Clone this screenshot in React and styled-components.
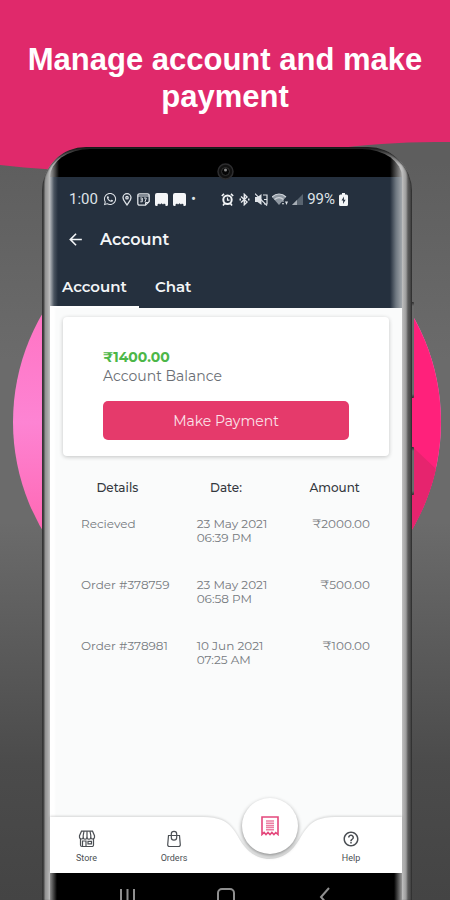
import styled, { createGlobalStyle } from 'styled-components'
import { FaWhatsapp } from 'react-icons/fa'
import { MdArrowBack, MdHelpOutline } from 'react-icons/md'

const GlobalStyle = createGlobalStyle`
    * {
        box-sizing: border-box;
    }

    body {
        margin: 0;
        font-family: Montserrat, Inter, sans-serif;
    }

    button {
        font-family: inherit;
        border: 0;
        cursor: pointer;
    }

    a {
        color: inherit;
        text-decoration: none;
    }
`

const Page = styled.div`
    position: relative;
    display: flex;
    flex-direction: column;
    min-height: 100vh;
    overflow: hidden;
    background: linear-gradient(180deg, #5e5e5e 18%, #6b6b6b 40%, #6b6b6b 58%, #4b4b4b 85%, #444);
`

const Wave = styled.svg`
    position: absolute;
    top: 0;
    left: 0;
    width: 100%;
    height: 172px;
`

const Disc = styled.svg`
    position: absolute;
    top: 208px;
    left: calc(50% - 212px);
    width: 428px;
    height: 428px;
`

const Banner = styled.header`
    position: relative;
    min-height: 147px;
    padding: 41px 12px 0;
`

const BannerTitle = styled.h1`
    margin: 0;
    color: #fff;
    font-family: 'Liberation Sans', Arial, sans-serif;
    font-size: 31px;
    font-weight: 700;
    line-height: 37px;
    text-align: center;
`

const PhoneWrapper = styled.div`
    position: relative;
    flex: 1;
    display: flex;
    margin: 0 38px 0 42px;
`

const PhoneBody = styled.div`
    position: relative;
    flex: 1;
    display: flex;
    flex-direction: column;
    padding: 2px 10px 0 8px;
    border-radius: 44px 44px 0 0;
    background:
        linear-gradient(180deg, #151515, rgba(20, 20, 20, 0) 18px),
        linear-gradient(90deg, #3c3c3c, #4a4a4a 2px, #909090 3px, #a8a8a8 6px, #c0c0c0 8px, #c0c0c0 calc(100% - 10px), #9c9c9c calc(100% - 6px), #5a5a5a calc(100% - 4px), #444 calc(100% - 1px), #333);
    box-shadow: inset 0 1px 2px #1c1c1c;
`

const SideKey = styled.span`
    position: absolute;
    top: ${({ $top }) => $top}px;
    right: -2px;
    width: 3px;
    height: ${({ $height }) => $height}px;
    border-radius: 1px;
    background: linear-gradient(180deg, #2c2c2c, #6b6b6b 4px, #6b6b6b calc(100% - 4px), #2c2c2c);
`

const Forehead = styled.div`
    height: 28px;
    border-radius: 40px 40px 0 0 / 28px 28px 0 0;
    background: linear-gradient(90deg, #a5a5a5, #000 9px, #000 calc(100% - 12px), #a5a5a5);
`

const Camera = styled.svg`
    position: absolute;
    top: 16px;
    left: calc(50% - 10px);
    width: 17px;
    height: 17px;
`

const AppHeader = styled.div`
    color: #f3f5f7;
    background: linear-gradient(90deg, #b3b7bb, #4a5460 4px, #25303e 8px, #25303e calc(100% - 12px), #6f7881 calc(100% - 6px), #a2a7ac);
`

const StatusBar = styled.div`
    display: flex;
    align-items: center;
    justify-content: space-between;
    height: 44px;
    padding: 0 54px 0 19px;
    color: #dfe3e8;
    font-family: Roboto, sans-serif;
    font-size: 15px;
`

const StatusGroup = styled.div`
    display: flex;
    align-items: center;
    gap: ${({ $gap }) => $gap}px;
`

const TitleBar = styled.div`
    display: flex;
    align-items: center;
    gap: 15px;
    height: 36px;
    padding-left: 16px;
`

const BackButton = styled.button`
    display: flex;
    padding: 0;
    color: inherit;
    background: none;
`

const ScreenTitle = styled.h2`
    margin: 0;
    font-size: 16px;
    font-weight: 600;
`

const Tabs = styled.nav`
    display: flex;
    gap: 4px;
    padding-top: 7px;
`

const Tab = styled.button`
    height: 44px;
    padding: 2px 12px 0;
    color: inherit;
    background: none;
    font-size: 15px;
    font-weight: 600;
    border-bottom: 2px solid ${({ $active }) => ($active ? '#fff' : 'transparent')};
`

const Content = styled.main`
    flex: 1;
    padding: 9px 13px 0;
    background: linear-gradient(90deg, #fff 4px, #fafbfb 6px);
`

const BalanceCard = styled.section`
    padding: 31px 40px 16px;
    background: #fff;
    border-radius: 4px;
    box-shadow: 0 1px 4px rgba(0, 0, 0, 0.22);
`

const Balance = styled.div`
    color: #4cb748;
    font-size: 14px;
    font-weight: 700;
    line-height: 19px;
`

const BalanceLabel = styled.div`
    color: #6a6e74;
    font-size: 14px;
    line-height: 19px;
`

const PayButton = styled.button`
    display: block;
    width: 100%;
    height: 39px;
    margin-top: 15px;
    color: #fbe3ea;
    background: #e53a6b;
    border-radius: 5px;
    font-size: 14px;
`

const Table = styled.table`
    width: 100%;
    margin-top: 24px;
    table-layout: fixed;
    border-collapse: collapse;
    font-size: 12px;
    line-height: 14px;

    th {
        height: 16px;
        padding: 0;
        color: #34383e;
        font-size: 12px;
        font-weight: 500;
        text-align: center;
    }

    td {
        height: 61px;
        padding: 21px 0 0 18px;
        color: #75797e;
        vertical-align: top;
    }

    td:nth-child(2) {
        padding-left: 25px;
    }

    td:last-child {
        padding-right: 19px;
        text-align: right;
    }
`

const BottomNav = styled.nav`
    position: relative;
    display: grid;
    grid-template-columns: 73fr 102fr 89fr 74fr;
    height: 56px;
    padding-right: 14px;
    background: #fafbfb;
`

const NavShape = styled.svg`
    position: absolute;
    top: -3px;
    left: 0;
    width: 100%;
    height: 59px;
    overflow: visible;
    filter: drop-shadow(0 -1px 1px rgba(0, 0, 0, 0.15));
`

const NavItem = styled.a`
    position: relative;
    display: flex;
    flex-direction: column;
    align-items: center;
    gap: 4px;
    padding-top: 13px;
    color: #4b4f54;
    font-family: Roboto, sans-serif;
    font-size: 9px;
    line-height: 12px;
`

const NavSlot = styled.div`
    position: relative;
`

const AccountButton = styled.button`
    position: absolute;
    top: -19px;
    left: calc(50% - 28px);
    display: flex;
    align-items: center;
    justify-content: center;
    width: 56px;
    height: 56px;
    color: #e4487c;
    background: #fff;
    border-radius: 50%;
    box-shadow: 0 2px 4px rgba(0, 0, 0, 0.45);
`

const SystemBar = styled.div`
    height: 27px;
    overflow: hidden;
    background: linear-gradient(90deg, #8a8a8a, #000 7px, #000 calc(100% - 8px), #9a9a9a);
`

const SystemKeys = styled.svg`
    display: block;
    width: 100%;
    height: 40px;
`

const LocationIcon = () => (
    <svg width='10' height='13' viewBox='0 0 10 13' fill='none' stroke='currentColor' strokeWidth='1.3'>
        <path d='M5 12C3 9 1 7 1 4.700a4 4 0 0 1 8 0C9 7 7 9 5 12z' />
        <circle cx='5' cy='4.700' r='1.200' />
    </svg>
)

const CalendarIcon = () => (
    <svg width='13' height='13' viewBox='0 0 13 13' fill='none' stroke='currentColor'>
        <path d='M2.500.8h8a1.700 1.700 0 0 1 1.700 1.700v6L8.500 12.200h-6A1.700 1.700 0 0 1 .8 10.500v-8A1.700 1.700 0 0 1 2.500.8z' strokeWidth='1.3' />
        <path d='M1 3h11M3.300 5h2v3.800h-2M3.600 6.900h1.700M7 5h2.300L8 8.900M8.500 12V9.500h3.300' strokeWidth='1' />
    </svg>
)

const StoreBadgeIcon = () => (
    <svg width='13' height='13' viewBox='0 0 13 13' fill='#f5f6f8'>
        <path d='M2 0h9a2 2 0 0 1 2 2v9.500a1.500 1.500 0 0 1-1.500 1.500H10.500v-1.500L9 10.500 8 11.500 6.500 10.300 5 11.500 4 10.500 2.500 11.500V13h-1A1.500 1.500 0 0 1 0 11.500V2a2 2 0 0 1 2-2z' />
    </svg>
)

const AlarmIcon = () => (
    <svg width='13' height='13' viewBox='0 0 13 13' fill='none' stroke='#f3f5f7'>
        <circle cx='6.500' cy='6.800' r='4.200' strokeWidth='2' />
        <path d='M6.500 4.500v2.600h2' strokeWidth='1.2' />
        <path d='M.8 3 3 .9M12.200 3 10 .9M2 12.500l1.500-2M11 12.500l-1.500-2' strokeWidth='1.6' />
    </svg>
)

const BluetoothIcon = () => (
    <svg width='13' height='13' viewBox='0 0 13 13' fill='none' stroke='#e6e9ed' strokeWidth='1.4'>
        <path d='M3 3.500l6 5.500-2.700 2.700V1.300L9 4 3 9.500' />
        <path d='M1.500 6.500h1.500M10 6.500h1.500' strokeWidth='1.800' />
    </svg>
)

const MuteIcon = () => (
    <svg width='13' height='13' viewBox='0 0 13 13' fill='none' stroke='currentColor' strokeWidth='1.2'>
        <path d='M0 4h2.500L6.500 1v11L2.500 9H0z' fill='currentColor' stroke='none' />
        <path d='M8 2h4v9H9M9 6.500h3M0 .6l12 12' />
    </svg>
)

const WifiIcon = () => (
    <svg width='16' height='13' viewBox='0 0 16 13'>
        <path d='M0 4C4 0 10 0 14 4L7 12z' fill='#8e97a1' />
        <path d='M0 4C4 0 10 0 14 4M2.500 6.500c3-2.500 6-2.500 9 0' fill='none' stroke='#cfd4da' strokeWidth='1.2' />
        <path d='M10 8.500h2L11 7zM10 10h2l-1 2zM13 8.500h3L14.500 12z' fill='#dfe3e8' />
    </svg>
)

const SignalIcon = () => (
    <svg width='11' height='11' viewBox='0 0 11 11'>
        <path d='M11 0v11H0z' fill='#596470' />
        <path d='M5 6v5H0z' fill='#a7aeb6' />
    </svg>
)

const BatteryIcon = () => (
    <svg width='9' height='13' viewBox='0 0 9 13'>
        <path d='M3 0h3v1.500h1.500A1.500 1.500 0 0 1 9 3v8.500A1.500 1.500 0 0 1 7.500 13h-6A1.500 1.500 0 0 1 0 11.500V3a1.500 1.500 0 0 1 1.500-1.500H3z' fill='#f3f5f7' />
        <path d='M5 3.500 2.500 7.500h1.700L4 11l2.600-4.200H4.900z' fill='#25303e' />
    </svg>
)

const StoreIcon = () => (
    <svg width='18' height='18' viewBox='0 0 18 18' fill='none' stroke='currentColor' strokeWidth='1.2'>
        <path d='M3.500 1.200h11l2 4.500v1.600a2 2 0 0 1-3.700.7 2.100 2.100 0 0 1-3.800 0 2.100 2.100 0 0 1-3.800 0 2 2 0 0 1-3.700-.7V5.700z' />
        <path d='M6 1.200 5.200 5.500V8M9 1.200V8M12 1.200l.8 4.300V8M2.500 9v6a1.500 1.500 0 0 0 1.500 1.500h10a1.500 1.500 0 0 0 1.500-1.500V9' />
        <path d='M4.500 16v-5H8v5M10 11.300h3.500v2.500H10z' />
    </svg>
)

const BagIcon = () => (
    <svg width='18' height='18' viewBox='0 0 18 18' fill='none' stroke='currentColor' strokeWidth='1.2'>
        <path d='M3.500 5.500h11l.8 9.200a1.700 1.700 0 0 1-1.700 1.800H4.400a1.700 1.700 0 0 1-1.700-1.800z' />
        <path d='M6.300 7.500V4a2.700 2.700 0 0 1 5.400 0v3.500a2.700 2.700 0 0 1-5.400 0' />
    </svg>
)

const ReceiptIcon = () => (
    <svg width='18' height='20' viewBox='0 0 18 20' fill='none' stroke='currentColor' strokeWidth='1.6'>
        <path d='M1 18.500V1h16v17.500l-2.200-2-1.900 2-2-2-1.900 2-2-2-2 2-1.900-2z' />
        <path d='M5 5h8M5 7.200h8M5 9.400h8M5 11.600h8M5 13.800h8' strokeWidth='1.5' opacity='.7' />
    </svg>
)

const transactions = [
    { details: 'Recieved', date: '23 May 2021', time: '06:39 PM', amount: '₹2000.00' },
    { details: 'Order #378759', date: '23 May 2021', time: '06:58 PM', amount: '₹500.00' },
    { details: 'Order #378981', date: '10 Jun 2021', time: '07:25 AM', amount: '₹100.00' },
]

const Header = () => {
    return <AppHeader>
        <StatusBar>
            <StatusGroup $gap={5}>
                <span>1:00</span>
                <FaWhatsapp size={14} />
                <LocationIcon />
                <CalendarIcon />
                <StoreBadgeIcon />
                <StoreBadgeIcon />
                <span>•</span>
            </StatusGroup>
            <StatusGroup $gap={4}>
                <AlarmIcon />
                <BluetoothIcon />
                <MuteIcon />
                <WifiIcon />
                <SignalIcon />
                <span>99%</span>
                <BatteryIcon />
            </StatusGroup>
        </StatusBar>
        <TitleBar>
            <BackButton aria-label='Back'><MdArrowBack size={19} /></BackButton>
            <ScreenTitle>Account</ScreenTitle>
        </TitleBar>
        <Tabs>
            <Tab $active>Account</Tab>
            <Tab>Chat</Tab>
        </Tabs>
    </AppHeader>
}

const Transactions = () => {
    return <Table>
        <thead>
            <tr>
                <th>Details</th>
                <th>Date:</th>
                <th>Amount</th>
            </tr>
        </thead>
        <tbody>
            {transactions.map(({ details, date, time, amount }) => (
                <tr key={details}>
                    <td>{details}</td>
                    <td>{date}<br />{time}</td>
                    <td>{amount}</td>
                </tr>
            ))}
        </tbody>
    </Table>
}

const Navigation = () => {
    return <BottomNav>
        <NavShape viewBox='0 0 352 59' preserveAspectRatio='none'>
            <path
                d='M0 3H153C184 3 184 20 195 33C208 49 231 49 244 33C255 20 256 3 285 3H352V59H0z'
                fill='#fff'
            />
        </NavShape>
        <NavItem href='#store'><StoreIcon />Store</NavItem>
        <NavItem href='#orders'><BagIcon />Orders</NavItem>
        <NavSlot>
            <AccountButton aria-label='Account'><ReceiptIcon /></AccountButton>
        </NavSlot>
        <NavItem href='#help'><MdHelpOutline size={18} />Help</NavItem>
    </BottomNav>
}

const App = () => {
    return <>
        <GlobalStyle />
        <Page>
            <Wave viewBox='0 0 450 172' preserveAspectRatio='none'>
                <path d='M0 0H450V142C410 142 380 143 340 148C240 162 120 180 0 165z' fill='#e0296b' />
            </Wave>
            <Disc viewBox='0 0 428 428'>
                <defs>
                    <linearGradient id='disc' x1='0' y1='0' x2='0' y2='1'>
                        <stop offset='0.25' stopColor='#ff74c4' />
                        <stop offset='0.5' stopColor='#fd84d3' />
                        <stop offset='0.75' stopColor='#ff68b4' />
                    </linearGradient>
                </defs>
                <circle cx='214' cy='214' r='214' fill='url(#disc)' />
                <path d='M214 0a214 214 0 0 1 0 428z' fill='#ff217b' />
                <path d='M385 225L423 261A214 214 0 0 1 300 410z' fill='#e6246e' />
            </Disc>
            <Banner>
                <BannerTitle>Manage account and make payment</BannerTitle>
            </Banner>
            <PhoneWrapper>
                <SideKey $top={155} $height={96} />
                <SideKey $top={300} $height={48} />
                <PhoneBody>
                    <Forehead />
                    <Header />
                    <Content>
                        <BalanceCard>
                            <Balance>₹1400.00</Balance>
                            <BalanceLabel>Account Balance</BalanceLabel>
                            <PayButton>Make Payment</PayButton>
                        </BalanceCard>
                        <Transactions />
                    </Content>
                    <Navigation />
                    <SystemBar>
                        <SystemKeys viewBox='0 0 352 40' fill='none' stroke='#8f8f8f' strokeWidth='2'>
                            <path d='M71 16v16M77.500 16v16M84 16v16' />
                            <rect x='168' y='16' width='16' height='17' rx='4' />
                            <path d='M279 15l-8 9 8 9' />
                        </SystemKeys>
                    </SystemBar>
                    <Camera viewBox='0 0 17 17'>
                        <circle cx='8.500' cy='8.500' r='7.500' fill='#111' stroke='#2d2d2f' strokeWidth='1.500' />
                        <circle cx='8.500' cy='8.500' r='4' fill='#050505' stroke='#333' />
                        <circle cx='8.500' cy='7' r='1.500' fill='#8b8b8b' />
                    </Camera>
                </PhoneBody>
            </PhoneWrapper>
        </Page>
    </>
}

export default App
